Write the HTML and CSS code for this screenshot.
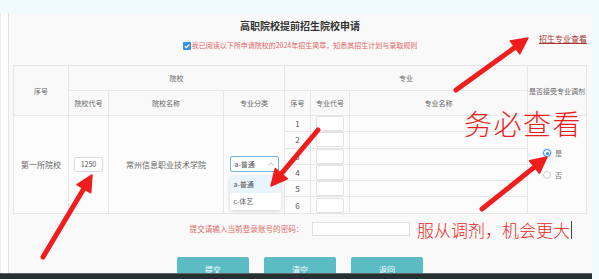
FILE: index.html
```html
<!DOCTYPE html>
<html lang="zh-CN">
<head>
<meta charset="utf-8">
<title>高职院校提前招生院校申请</title>
<link rel="stylesheet" href="styles.css">
</head>
<body>
<div class="top-band"></div>
<div class="frame">
  <div class="side-strip"></div>
  <main class="panel">
    <h1 class="title">高职院校提前招生院校申请</h1>
    <div class="link-row"><a class="view-link" href="#">招生专业查看</a></div>
    <div class="agree">
      <span class="check"><svg viewBox="0 0 8 8" width="8" height="8"><polyline points="1.8,4.1 3.4,5.6 6.3,2.5" fill="none" stroke="#fff" stroke-width="1.2"/></svg></span>
      <span>我已阅读以下所申请院校的2024年招生简章，知悉其招生计划与录取规则</span>
    </div>
    <table class="apply">
      <colgroup>
        <col class="c1"><col class="c2"><col class="c3"><col class="c4"><col class="c5"><col class="c6"><col class="c7"><col class="c8">
      </colgroup>
      <thead>
        <tr class="h1">
          <th rowspan="2">序号</th>
          <th colspan="3">院校</th>
          <th colspan="3">专业</th>
          <th rowspan="2">是否接受专业调剂</th>
        </tr>
        <tr class="h2">
          <th>院校代号</th>
          <th>院校名称</th>
          <th>专业分类</th>
          <th>序号</th>
          <th>专业代号</th>
          <th>专业名称</th>
        </tr>
      </thead>
      <tbody>
        <tr>
          <td rowspan="6" class="big">第一所院校</td>
          <td rowspan="6"><span class="code-input">1250</span></td>
          <td rowspan="6" class="big">常州信息职业技术学院</td>
          <td rowspan="6">
            <span class="select">
              <span class="sel-text">a-普通</span>
              <svg class="chev" viewBox="0 0 6 4" width="6" height="4"><polyline points="0.5,3.5 3,1 5.5,3.5" fill="none" stroke="#aaa" stroke-width="0.8"/></svg>
              <span class="dropdown">
                <span class="opt active">a-普通</span>
                <span class="opt">c-体艺</span>
              </span>
            </span>
          </td>
          <td class="num">1</td>
          <td class="mcode"><span class="m-input"></span></td>
          <td></td>
          <td rowspan="6" class="adjust">
            <div class="radio-line"><span class="radio on"></span><span>是</span></div>
            <div class="radio-line"><span class="radio"></span><span>否</span></div>
          </td>
        </tr>
        <tr><td class="num">2</td><td class="mcode"><span class="m-input"></span></td><td></td></tr>
        <tr><td class="num">3</td><td class="mcode"><span class="m-input"></span></td><td></td></tr>
        <tr><td class="num">4</td><td class="mcode"><span class="m-input"></span></td><td></td></tr>
        <tr><td class="num">5</td><td class="mcode"><span class="m-input"></span></td><td></td></tr>
        <tr><td class="num">6</td><td class="mcode"><span class="m-input"></span></td><td></td></tr>
      </tbody>
    </table>
    <div class="pwd-row">
      <span class="pwd-label">提交请输入当前登录账号的密码：</span>
      <span class="pwd-input"></span>
    </div>
    <div class="btn-row">
      <button class="btn">提交</button>
      <button class="btn">清空</button>
      <button class="btn">返回</button>
    </div>
  </main>
  <div class="right-gap"></div>
</div>
<div class="taskbar"></div>
<svg class="annot" viewBox="0 0 599 279" width="599" height="279">
  <g stroke="#f01d1d" stroke-width="5" stroke-linecap="round" fill="#f01d1d">
    <line x1="43" y1="257" x2="84.5" y2="187.5"/>
    <line x1="318" y1="130" x2="282" y2="172.8"/>
    <line x1="456" y1="90" x2="515.8" y2="46.8"/>
    <line x1="482" y1="209" x2="535.3" y2="166.4"/>
  </g>
  <g fill="#f01d1d" stroke="#f01d1d" stroke-width="1.5" stroke-linejoin="round">
    <polygon points="92,175 90.7,192.8 77,184.6"/>
    <polygon points="271,186 275.2,168.6 287.4,178.8"/>
    <polygon points="528,38 519.7,53.9 510.3,40.9"/>
    <polygon points="547,157 539.5,173.2 529.5,160.8"/>
  </g>
</svg>
<div class="note note-big">务必查看</div>
<div class="note note-small">服从调剂，机会更大<span class="caret"></span></div>
</body>
</html>
```
FILE: styles.css
```css
* { box-sizing: border-box; }
html, body { margin: 0; padding: 0; }
body {
  width: 599px;
  height: 279px;
  overflow: hidden;
  background: #effbfd;
  font-family: "Noto Sans CJK SC", "Noto Sans", sans-serif;
  color: #666;
  position: relative;
}
.top-band { height: 13px; }
.frame { display: flex; height: 266px; }
.side-strip {
  flex: 0 0 9px;
  background: #fff;
  border-left: 1px solid #ececec;
  border-right: 1px solid #e4e4e4;
}
.panel {
  flex: 0 0 583px;
  background: #f9f9f9;
  padding: 0 6px 0 4px;
}
.right-gap { flex: 1; }
.title {
  margin: 7px 0 0;
  font-size: 10px;
  line-height: 11px;
  font-weight: bold;
  color: #333;
  text-align: center;
}
.link-row {
  height: 8px;
  line-height: 8px;
  text-align: right;
}
.view-link {
  font-size: 8px;
  color: #a8342f;
  text-decoration: underline;
}
.agree {
  margin-top: 2px;
  height: 9px;
  line-height: 9px;
  font-size: 7px;
  color: #e06464;
  display: flex;
  justify-content: center;
  align-items: center;
  gap: 1px;
}
.check {
  width: 8px;
  height: 8px;
  border-radius: 1px;
  background: #3a8fe0;
  display: inline-flex;
}
.apply {
  margin-top: 15px;
  width: 573px;
  table-layout: fixed;
  border-collapse: collapse;
  background: #fcfcfc;
  font-size: 7px;
  color: #666;
}
.apply th, .apply td {
  border: 1px solid #e6e6e6;
  padding: 0;
  text-align: center;
  vertical-align: middle;
  font-weight: normal;
}
.apply thead th { background: #f9f9f9; }
.c1 { width: 55px; } .c2 { width: 40px; } .c3 { width: 115px; } .c4 { width: 61px; }
.c5 { width: 26px; } .c6 { width: 39px; } .c7 { width: 178px; } .c8 { width: 59px; }
.h1 th, .h2 th { height: 25px; }
.apply tbody td { height: 16.3px; }
.big { font-size: 8px; color: #666; }
.num { font-size: 8px; color: #555; }
.code-input {
  display: inline-block;
  width: 29px;
  height: 15px;
  line-height: 13px;
  border: 1px solid #dcdcdc;
  border-radius: 2px;
  background: #fff;
  font-size: 7px;
  color: #555;
}
.select {
  position: relative;
  display: inline-flex;
  align-items: center;
  justify-content: space-between;
  width: 49px;
  height: 16px;
  padding: 0 4px;
  border: 1px solid #74b6e2;
  border-radius: 2px;
  background: #fff;
  font-size: 7px;
  color: #555;
  text-align: left;
}
.dropdown {
  position: absolute;
  top: 19px;
  left: -1px;
  width: 51px;
  background: #fff;
  border-radius: 2px;
  box-shadow: 0 1px 4px rgba(0,0,0,0.18);
  display: flex;
  flex-direction: column;
}
.opt {
  height: 17px;
  line-height: 17px;
  padding-left: 4px;
  color: #666;
}
.opt.active { background: #e8f5fc; color: #555; }
.mcode { padding: 0; }
.m-input {
  display: block;
  width: 28px;
  height: 15px;
  margin: 0 auto;
  background: #fff;
  border: 1px solid #e2e2e2;
  border-radius: 2px;
}
.adjust { text-align: left !important; padding-left: 15px !important; }
.radio-line {
  display: flex;
  align-items: center;
  gap: 4px;
  height: 11px;
  font-size: 7px;
  color: #777;
}
.radio-line + .radio-line { margin-top: 11px; }
.radio {
  width: 8px;
  height: 8px;
  border-radius: 50%;
  border: 1px solid #d0d0d0;
  background: #fff;
  position: relative;
}
.radio.on { border-color: #2d8cf0; box-shadow: 0 0 0 1px rgba(45,140,240,0.18); }
.radio.on::after {
  content: "";
  position: absolute;
  left: 1.5px;
  top: 1.5px;
  width: 3px;
  height: 3px;
  border-radius: 50%;
  background: #2d8cf0;
}
.pwd-row {
  margin-top: 8px;
  display: flex;
  justify-content: center;
  align-items: center;
  gap: 9px;
}
.pwd-label { font-size: 7.6px; color: #df6b6b; }
.pwd-input {
  width: 98px;
  height: 14px;
  background: #fff;
  border: 1px solid #e0e0e0;
}
.btn-row {
  margin-top: 21px;
  display: flex;
  justify-content: center;
  gap: 15px;
}
.btn {
  width: 72px;
  height: 25px;
  border: none;
  border-radius: 2px;
  background: #5bbcc4;
  color: #fff;
  font-family: "Noto Sans CJK SC", sans-serif;
  font-size: 8px;
  padding: 0;
}
.taskbar {
  position: absolute;
  left: 0;
  top: 273px;
  width: 592px;
  height: 6px;
  background: #273033;
  border-top: 1px solid #5d666a;
}
.annot { position: absolute; left: 0; top: 0; pointer-events: none; }
.note {
  position: absolute;
  color: #ec1f1a;
  font-family: "Noto Sans CJK SC", sans-serif;
  font-weight: 300;
  white-space: nowrap;
}
.note-big {
  left: 464px;
  top: 109px;
  font-size: 28px;
  line-height: 28px;
  letter-spacing: 1.5px;
}
.note-small {
  left: 417px;
  top: 221px;
  font-size: 17px;
  line-height: 18px;
  display: flex;
  align-items: center;
}
.caret {
  display: inline-block;
  width: 1px;
  height: 18px;
  background: #444;
  margin-left: 1px;
}
```
